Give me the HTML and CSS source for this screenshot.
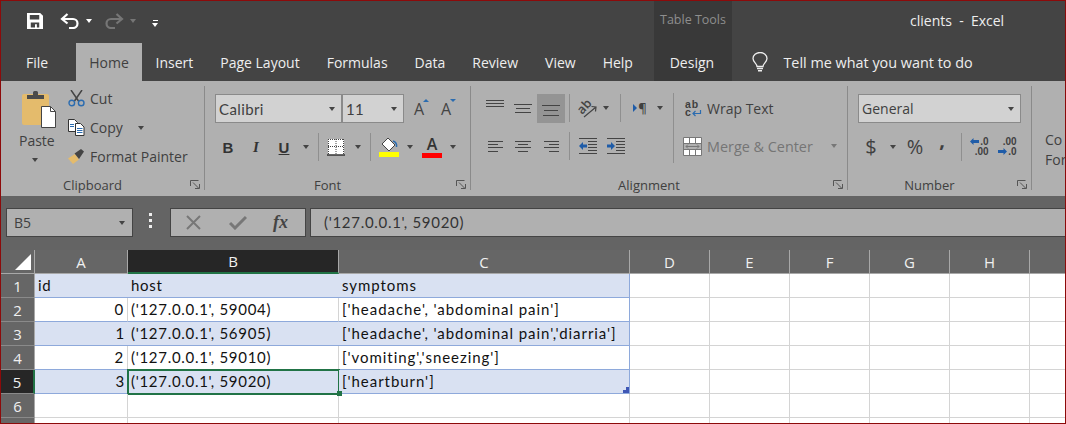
FILE: index.html
```html
<!DOCTYPE html>
<html lang="en">
<head>
    <meta charset="UTF-8">
    <title>clients - Excel</title>
    <link rel="stylesheet" href="styles.css">
</head>
<body>

<div class="window">

    <div class="titlebar">
        <div class="qat">
            <svg class="qat-save" width="16" height="16" viewBox="0 0 17 17"><path fill="#fff" d="M0 0h14l3 3v14H0z"/><path fill="#444" d="M3 2h10v5H3zM4 10h9v5.500h-2.500v-3.500H8.500v3.500H4z"/></svg>
            <svg class="qat-undo" width="20" height="16" viewBox="0 0 20 16"><path fill="none" stroke="#fff" stroke-width="2.200" d="M7.500 1 2 6l5.500 4.500M2 6h11a4.500 4.500 0 0 1 0 9h-4"/></svg>
            <span class="caret caret-white qat-caret"></span>
            <svg class="qat-redo" width="20" height="16" viewBox="0 0 20 16"><path fill="none" stroke="#767676" stroke-width="2.200" d="M12.500 1 18 6l-5.500 4.500M18 6H7a4.500 4.500 0 0 0 0 9h4"/></svg>
            <span class="caret caret-grey qat-caret"></span>
            <span class="qat-custom"><i></i><span class="caret caret-white"></span></span>
        </div>
        <div class="context-title">Table Tools</div>
        <div class="app-title">clients&nbsp; -&nbsp; Excel</div>
    </div>

    <div class="tabs">
        <span class="tab tab-file">File</span>
        <span class="tab tab-active">Home</span>
        <span class="tab">Insert</span>
        <span class="tab">Page Layout</span>
        <span class="tab">Formulas</span>
        <span class="tab">Data</span>
        <span class="tab">Review</span>
        <span class="tab">View</span>
        <span class="tab">Help</span>
        <span class="tab tab-design">Design</span>
        <svg class="bulb" width="16" height="20" viewBox="0 0 16 20"><path fill="none" stroke="#eee" stroke-width="1.300" d="M5 14.500C5 11.500 1 10 1 6.500a7 6 0 0 1 14 0C15 10 11 11.500 11 14.500z"/><path stroke="#eee" stroke-width="1.500" d="M5 16.500h6M6 18.800h4"/></svg>
        <span class="tell-me">Tell me what you want to do</span>
    </div>

    <div class="ribbon">

        <section class="group group-clipboard">
            <div class="group-body clip-body">
                <div class="paste">
                    <svg width="35" height="39" viewBox="0 0 35 39"><rect y="4" width="27" height="31" rx="2" fill="#e4bb6c"/><path fill="#4b4b4b" d="M5 9V5h6V2.500a1.500 1.500 0 0 1 1.500-1.500h2A1.500 1.500 0 0 1 16 2.500V5h6v4z"/><path fill="#fff" stroke="#444" d="M19.500 16.500h9l5 5v16h-14z"/><path fill="none" stroke="#444" d="M28.500 16.500v5h5"/></svg>
                    <span class="paste-label">Paste</span>
                    <span class="caret"></span>
                </div>
                <div class="clip-actions">
                    <div class="clip-action">
                        <svg width="17" height="17" viewBox="0 0 17 17"><path stroke="#444" stroke-width="1.500" fill="none" d="M3 0l7.500 11M14 0 6.500 11"/><circle cx="3.800" cy="13" r="2.800" fill="none" stroke="#2b6cb0" stroke-width="1.400"/><circle cx="13.200" cy="13" r="2.800" fill="none" stroke="#2b6cb0" stroke-width="1.400"/></svg>
                        <span>Cut</span>
                    </div>
                    <div class="clip-action">
                        <svg width="17" height="17" viewBox="0 0 17 17"><path fill="#fff" stroke="#333" d="M.5.500h6l3 3v9h-9z"/><path fill="#fff" stroke="#333" d="M7.500 4.500h5l3.500 3.500v8.500H7.500z"/><path stroke="#2b6cb0" d="M9 9.500h5.500M9 11.500h5.500M9 13.500h5.500M2 5.500h4M2 7.500h4"/></svg>
                        <span>Copy</span>
                        <span class="caret copy-caret"></span>
                    </div>
                    <div class="clip-action">
                        <svg width="17" height="17" viewBox="0 0 17 17"><path fill="#e4bb6c" d="M0 10.500 7 6l4 5.500L5 16z"/><path fill="#444" d="M6.500 5.500 13 1l3 2.500-5 7.500z"/></svg>
                        <span>Format Painter</span>
                    </div>
                </div>
            </div>
            <div class="group-label">Clipboard</div>
            <svg class="launcher" width="10" height="9" viewBox="0 0 10 9"><path fill="none" stroke="#555" d="M.5 6V.5h8M3 2.500 8.500 8M9.500 4v4.500H5"/></svg>
        </section>

        <section class="group group-font">
            <div class="group-body font-body">
                <div class="row font-row-top">
                    <div class="select select-font"><span class="select-text">Calibri</span><span class="caret"></span></div>
                    <div class="select select-size"><span class="select-text">11</span><span class="caret"></span></div>
                    <span class="size-btn">A<i class="size-mark mark-up"></i></span>
                    <span class="size-btn">A<i class="size-mark mark-down"></i></span>
                </div>
                <div class="row font-row-bottom">
                    <b class="glyph">B</b>
                    <i class="glyph glyph-italic">I</i>
                    <u class="glyph glyph-under">U</u>
                    <span class="caret"></span>
                    <span class="sep"></span>
                    <svg width="18" height="18" viewBox="0 0 18 18"><path fill="#fff" d="M1 1h16v16H1z"/><path stroke="#444" stroke-dasharray="1 1" d="M1 1.500h16M1 8.500h16M9 1v15M1.500 1v15M16.500 1v15"/><path stroke="#333" stroke-width="1.500" d="M0 17h18"/></svg>
                    <span class="caret"></span>
                    <span class="sep"></span>
                    <svg width="20" height="20" viewBox="0 0 20 20"><path fill="#fff" stroke="#444" d="M9 1l7 7-6 6-7-7z"/><path fill="none" stroke="#2b6cb0" stroke-width="1.500" d="M14 4c3 1 4 3 3.500 6"/><path fill="#ff0" d="M0 15h20v5H0z"/></svg>
                    <span class="caret"></span>
                    <span class="font-color">A</span>
                    <span class="caret"></span>
                </div>
            </div>
            <div class="group-label">Font</div>
            <svg class="launcher" width="10" height="9" viewBox="0 0 10 9"><path fill="none" stroke="#555" d="M.5 6V.5h8M3 2.500 8.500 8M9.500 4v4.500H5"/></svg>
        </section>

        <section class="group group-align">
            <div class="group-body align-body">
                <div class="align-left">
                    <div class="row align-row-top">
                        <svg width="18" height="9" viewBox="0 0 18 9" class="up-4"><path stroke="#444" d="M0 .5h18M0 3.500h18M0 6.500h18"/></svg>
                        <svg width="18" height="9" viewBox="0 0 18 9"><path stroke="#444" d="M0 .5h18M2 4.500h14M1 8.500h16"/></svg>
                        <span class="tool-active"><svg width="18" height="11" viewBox="0 0 18 11"><path stroke="#444" d="M0 .5h18M2 5.500h14M1 10.500h16"/></svg></span>
                        <span class="sep"></span>
                        <svg class="orient-icon" width="22" height="22" viewBox="0 0 22 22"><text x="1" y="14" class="orient-text" transform="rotate(-48 8 10)">ab</text><path fill="none" stroke="#444" stroke-width="1.200" d="M8 20 20 10M15.500 9.500l4.500.5-.5 4.500"/></svg>
                        <span class="caret"></span>
                        <span class="sep sep-mid"></span>
                        <span class="para"><i class="para-arrow"></i>&para;</span>
                        <span class="caret"></span>
                    </div>
                    <div class="row align-row-bottom">
                        <svg width="15" height="11" viewBox="0 0 15 11"><path stroke="#444" d="M0 .5h15M0 3.500h10M0 6.500h15M0 10.500h10"/></svg>
                        <svg width="16" height="11" viewBox="0 0 16 11"><path stroke="#444" d="M0 .5h16M3 3.500h10M0 6.500h16M3 10.500h10"/></svg>
                        <svg width="15" height="11" viewBox="0 0 15 11"><path stroke="#444" d="M0 .5h15M5 3.500h10M0 6.500h15M5 10.500h10"/></svg>
                        <span class="sep"></span>
                        <svg width="18" height="16" viewBox="0 0 18 16"><path stroke="#444" d="M0 .5h18M9 3.500h9M9 6.500h9M9 9.500h9M9 12.500h9M0 15.500h18"/><path fill="#1f5ca8" d="M0 8l4-4v2.500h4v3H4V12z"/></svg>
                        <svg width="18" height="16" viewBox="0 0 18 16"><path stroke="#444" d="M0 .5h18M9 3.500h9M9 6.500h9M9 9.500h9M9 12.500h9M0 15.500h18"/><path fill="#1f5ca8" d="M8 8 4 4v2.500H0v3h4V12z"/></svg>
                    </div>
                </div>
                <span class="sep sep-tall"></span>
                <div class="align-right">
                    <div class="wide-tool wrap-tool">
                        <svg class="wrap-icon" width="17" height="17" viewBox="0 0 17 17"><text x="0" y="8">ab</text><text x="0" y="16">c</text><path fill="none" stroke="#2b6cb0" stroke-width="1.200" d="M15.500 10v3.500H8M10.500 11 8 13.500l2.500 2.500"/></svg>
                        <span>Wrap Text</span>
                    </div>
                    <div class="wide-tool merge-tool">
                        <svg width="19" height="19" viewBox="0 0 19 19"><path fill="#fff" stroke="#777" d="M.5.500h18v18H.5z"/><path stroke="#777" d="M0 6.500h19M0 12.500h19M6.500 0v6M12.500 0v6M6.500 13v6M12.500 13v6"/><path fill="#b0b0b0" d="M1 7h17v5H1z"/><path fill="none" stroke="#777" d="M3 9.500h13M5 7.500l-2 2 2 2M14 7.500l2 2-2 2"/></svg>
                        <span>Merge &amp; Center</span>
                        <span class="caret caret-dim merge-caret"></span>
                    </div>
                </div>
            </div>
            <div class="group-label">Alignment</div>
            <svg class="launcher" width="10" height="9" viewBox="0 0 10 9"><path fill="none" stroke="#555" d="M.5 6V.5h8M3 2.500 8.500 8M9.500 4v4.500H5"/></svg>
        </section>

        <section class="group group-number">
            <div class="group-body number-body">
                <div class="select select-format"><span class="select-text select-ui">General</span><span class="caret"></span></div>
                <div class="row number-row">
                    <span class="num-glyph">$</span>
                    <span class="caret"></span>
                    <span class="num-glyph">%</span>
                    <span class="num-glyph num-comma">,</span>
                    <span class="sep"></span>
                    <span class="decimal">
                        <span><svg width="9" height="7" viewBox="0 0 9 7"><path fill="#1f5ca8" d="M0 3.500 3.500 0v2H9v3H3.500v2z"/></svg>.0</span>
                        <span>.00</span>
                    </span>
                    <span class="decimal">
                        <span>.00</span>
                        <span><svg width="9" height="7" viewBox="0 0 9 7"><path fill="#1f5ca8" d="M9 3.500 5.500 0v2H0v3h5.500v2z"/></svg>.0</span>
                    </span>
                </div>
            </div>
            <div class="group-label">Number</div>
            <svg class="launcher" width="10" height="9" viewBox="0 0 10 9"><path fill="none" stroke="#555" d="M.5 6V.5h8M3 2.500 8.500 8M9.500 4v4.500H5"/></svg>
        </section>

        <div class="cut-off">Co<br>For</div>
    </div>

    <div class="formula-bar">
        <div class="name-box"><span>B5</span><span class="caret"></span></div>
        <div class="formula-dots"><i></i><i></i><i></i></div>
        <div class="formula-buttons">
            <svg width="17" height="15" viewBox="0 0 17 15"><path stroke="#777" stroke-width="2" d="M2 1l13 13M15 1 2 14"/></svg>
            <svg width="18" height="15" viewBox="0 0 18 15"><path fill="none" stroke="#777" stroke-width="3" d="M1 8l5 5L17 2"/></svg>
            <span class="fx">fx</span>
        </div>
        <div class="formula-input">('127.0.0.1', 59020)</div>
    </div>

    <div class="sheet">
        <div class="corner"><i></i></div>
        <div class="col-head">A</div>
        <div class="col-head col-active">B</div>
        <div class="col-head">C</div>
        <div class="col-head">D</div>
        <div class="col-head">E</div>
        <div class="col-head">F</div>
        <div class="col-head">G</div>
        <div class="col-head">H</div>
        <div class="col-head"></div>

        <div class="row-head">1</div>
        <div class="cell band">id</div>
        <div class="cell band">host</div>
        <div class="cell band band-end">symptoms</div>
        <div class="cell"></div><div class="cell"></div><div class="cell"></div><div class="cell"></div><div class="cell"></div><div class="cell"></div>

        <div class="row-head">2</div>
        <div class="cell plain num">0</div>
        <div class="cell plain">('127.0.0.1', 59004)</div>
        <div class="cell plain band-end">['headache', 'abdominal pain']</div>
        <div class="cell"></div><div class="cell"></div><div class="cell"></div><div class="cell"></div><div class="cell"></div><div class="cell"></div>

        <div class="row-head">3</div>
        <div class="cell band num">1</div>
        <div class="cell band">('127.0.0.1', 56905)</div>
        <div class="cell band band-end">['headache', 'abdominal pain','diarria']</div>
        <div class="cell"></div><div class="cell"></div><div class="cell"></div><div class="cell"></div><div class="cell"></div><div class="cell"></div>

        <div class="row-head">4</div>
        <div class="cell plain num">2</div>
        <div class="cell plain">('127.0.0.1', 59010)</div>
        <div class="cell plain band-end">['vomiting','sneezing']</div>
        <div class="cell"></div><div class="cell"></div><div class="cell"></div><div class="cell"></div><div class="cell"></div><div class="cell"></div>

        <div class="row-head row-active">5</div>
        <div class="cell band num">3</div>
        <div class="cell band cell-selected">('127.0.0.1', 59020)<i class="fill-handle"></i></div>
        <div class="cell band band-end">['heartburn']<i class="resize-handle"></i></div>
        <div class="cell"></div><div class="cell"></div><div class="cell"></div><div class="cell"></div><div class="cell"></div><div class="cell"></div>

        <div class="row-head">6</div>
        <div class="cell"></div><div class="cell"></div><div class="cell"></div>
        <div class="cell"></div><div class="cell"></div><div class="cell"></div><div class="cell"></div><div class="cell"></div><div class="cell"></div>

        <div class="row-head"></div>
        <div class="cell"></div><div class="cell"></div><div class="cell"></div>
        <div class="cell"></div><div class="cell"></div><div class="cell"></div><div class="cell"></div><div class="cell"></div><div class="cell"></div>
    </div>
</div>

</body>
</html>
```

FILE: styles.css
```css
* {
    box-sizing: border-box;
}

body {
    margin: 0;
    font-family: 'Open Sans', 'Noto Sans', sans-serif;
    color: #404040;
    background: #fff;
}

i {
    font-style: normal;
}

.window {
    width: 1066px;
    height: 424px;
    border: 1px solid #8c0a0a;
    overflow: hidden;
    background: #444;
}

/* title bar */

.titlebar {
    display: flex;
    height: 42px;
    background: #444;
    color: #eee;
}

.qat {
    display: flex;
    align-items: center;
    width: 653px;
    padding-left: 26px;
    padding-bottom: 3px;
}

.qat-undo {
    margin-left: 17px;
}

.qat-caret {
    margin-left: 6px;
}

.qat-redo {
    margin-left: 12px;
}

.qat-custom {
    display: flex;
    flex-direction: column;
    align-items: center;
    margin-left: 16px;
    margin-top: 5px;
    gap: 2px;
}

.qat-custom i {
    width: 5px;
    height: 1px;
    background: #fff;
}

.context-title {
    width: 78px;
    background: #393939;
    color: #8e8e8e;
    font-size: 12.500px;
    text-align: center;
    padding-top: 10px;
}

.app-title {
    margin-left: 178px;
    padding-top: 10px;
    font-size: 14px;
    color: #eee;
}

/* tabs */

.tabs {
    display: flex;
    align-items: center;
    height: 38px;
    background: #444;
    color: #eee;
    font-size: 14px;
}

.tab {
    display: flex;
    align-items: center;
    justify-content: center;
    height: 38px;
    padding: 0 13.500px;
    white-space: nowrap;
}

.tab-file {
    padding: 0 3px 0 0;
    width: 75px;
}

.tab-active {
    width: 66px;
    padding: 0;
    background: #b0b0b0;
    color: #404040;
}

.tab-design {
    width: 78px;
    padding: 0 3px 0 0;
    margin-left: 8px;
    background: #393939;
}

.bulb {
    margin-left: 20px;
    margin-right: 15px;
}

.tell-me {
    font-size: 14.400px;
    white-space: nowrap;
}

/* ribbon */

.ribbon {
    display: flex;
    height: 115px;
    padding: 5px 0 6px;
    background: #b0b0b0;
    font-size: 14px;
    overflow: hidden;
}

.group {
    position: relative;
    display: flex;
    flex-direction: column;
    flex-shrink: 0;
    border-right: 1px solid #8a8a8a;
}

.group-clipboard {
    width: 204px;
}

.group-font {
    width: 266px;
}

.group-align {
    width: 377px;
}

.group-number {
    width: 184px;
}

.group-body {
    flex: 1;
}

.group-label {
    height: 14px;
    padding-right: 20px;
    text-align: center;
    font-size: 13px;
    line-height: 18px;
}

.launcher {
    position: absolute;
    right: 4px;
    bottom: 1px;
}

.caret {
    display: inline-block;
    width: 0;
    height: 0;
    border-left: 3.500px solid transparent;
    border-right: 3.500px solid transparent;
    border-top: 4px solid #444;
}

.caret-white {
    border-top-color: #fff;
}

.caret-grey {
    border-top-color: #767676;
}

.caret-dim {
    border-top-color: #777;
}

.sep {
    width: 1px;
    height: 28px;
    background: #8f8f8f;
}

.row {
    display: grid;
    align-items: center;
    justify-items: center;
}

/* clipboard */

.clip-body {
    display: flex;
    padding-left: 21px;
}

.paste {
    display: flex;
    flex-direction: column;
    align-items: flex-start;
    width: 35px;
    padding-top: 4px;
}

.paste-label {
    margin: 2px 0 0 -3px;
    font-size: 14px;
    line-height: 20px;
}

.paste .caret {
    margin: 7px 0 0 10px;
}

.clip-actions {
    display: flex;
    flex-direction: column;
    gap: 12px;
    margin-left: 11px;
    padding-top: 4px;
}

.clip-action {
    display: flex;
    align-items: center;
    gap: 5px;
    height: 17px;
    white-space: nowrap;
}

.copy-caret {
    margin-left: 10px;
}

/* font */

.font-body {
    padding: 8px 0 0 10px;
}

.font-row-top {
    grid-template-columns: 127px 63px 28px 26px;
    justify-items: start;
}

.font-row-bottom {
    grid-template-columns: 26px 30px 26px 18px 6px 30px 14px 10px 28px 14px 30px 12px;
    height: 28px;
    margin-top: 10px;
}

.select {
    display: flex;
    align-items: center;
    justify-content: space-between;
    height: 29px;
    padding: 0 6px 0 3px;
    background: #d2d2d2;
    border: 1px solid #8a8a8a;
}

.select-font {
    width: 127px;
}

.select-size {
    width: 62px;
}

.select-text {
    font-family: 'Lato', sans-serif;
    font-size: 15px;
    letter-spacing: 0.400px;
}

.select-ui {
    font-family: 'Open Sans', sans-serif;
    font-size: 14px;
    letter-spacing: 0;
}

.size-btn {
    position: relative;
    justify-self: center;
    font-size: 16px;
    line-height: 20px;
    color: #444;
}

.size-mark {
    position: absolute;
    right: -5px;
    top: 0;
    width: 0;
    height: 0;
    border-left: 3px solid transparent;
    border-right: 3px solid transparent;
}

.mark-up {
    border-bottom: 3px solid #2b6cb0;
}

.mark-down {
    border-top: 3px solid #2b6cb0;
}

.glyph {
    font-family: 'Liberation Sans', sans-serif;
    font-size: 15px;
    font-weight: bold;
    color: #333;
}

.glyph-italic {
    font-family: 'Liberation Serif', serif;
    font-style: italic;
}

.font-color {
    font-size: 16px;
    font-weight: 600;
    line-height: 17px;
    width: 20px;
    text-align: center;
    color: #333;
    border-bottom: 5px solid #f00;
}

/* alignment */

.align-body {
    display: flex;
    padding: 7px 0 0 10px;
}

.align-left {
    width: 192px;
}

.align-row-top {
    grid-template-columns: 28px 28px 28px 8px 28px 10px 18px 22px 18px;
    height: 30px;
}

.align-row-bottom {
    grid-template-columns: 28px 28px 28px 8px 30px 26px;
    height: 28px;
    margin-top: 9px;
}

.up-4 {
    transform: translateY(-4px);
}

.tool-active {
    display: flex;
    align-items: flex-end;
    justify-content: center;
    width: 28px;
    height: 29px;
    padding-bottom: 7px;
    background: #949494;
}

.orient-icon {
    overflow: visible;
}

.orient-text {
    font-size: 12.500px;
    font-weight: 600;
    fill: #444;
}

.sep-mid {
    height: 28px;
}

.para {
    display: flex;
    align-items: center;
    gap: 1px;
    font-size: 13px;
    font-weight: 600;
}

.para-arrow {
    width: 0;
    height: 0;
    border-top: 4px solid transparent;
    border-bottom: 4px solid transparent;
    border-left: 4px solid #1f5ca8;
}

.sep-tall {
    height: 70px;
    flex-shrink: 0;
}

.align-right {
    display: flex;
    flex-direction: column;
    gap: 10px;
    padding-top: 1px;
}

.wide-tool {
    display: flex;
    align-items: center;
    height: 28px;
    white-space: nowrap;
}

.wrap-tool {
    gap: 5px;
    padding-left: 11px;
}

.wrap-icon {
    overflow: visible;
}

.wrap-icon text {
    font-family: 'Liberation Sans', sans-serif;
    font-size: 10.500px;
    font-weight: bold;
    letter-spacing: 0.800px;
    fill: #404040;
}

.merge-tool {
    gap: 5px;
    padding-left: 9px;
    font-size: 14.400px;
    color: #757575;
}

.merge-caret {
    margin-left: 13px;
}

/* number */

.number-body {
    padding: 8px 0 0 10px;
}

.select-format {
    width: 163px;
}

.number-row {
    grid-template-columns: 26px 18px 26px 28px 10px 27px 29px;
    height: 28px;
    margin-top: 10px;
}

.num-glyph {
    font-size: 20px;
    line-height: 22px;
}

.num-comma {
    font-weight: bold;
    margin-top: -14px;
}

.decimal {
    display: flex;
    flex-direction: column;
    align-items: flex-end;
    font-family: 'Liberation Sans', sans-serif;
    font-size: 10px;
    font-weight: bold;
    line-height: 10px;
}

.decimal svg {
    margin-right: 1px;
}

.cut-off {
    padding: 44px 0 0 13px;
    line-height: 20px;
    white-space: nowrap;
}

/* formula bar */

.formula-bar {
    display: flex;
    align-items: flex-start;
    height: 54px;
    padding: 12px 0 0 5px;
    background: #646464;
}

.name-box {
    display: flex;
    align-items: center;
    justify-content: space-between;
    width: 127px;
    height: 29px;
    padding: 0 7px 0 7px;
    background: #b0b0b0;
    border: 1px solid #444;
    font-size: 14px;
}

.formula-dots {
    display: flex;
    flex-direction: column;
    gap: 3px;
    width: 37px;
    padding: 5px 0 0 16px;
}

.formula-dots i {
    width: 3px;
    height: 3px;
    background: #eee;
}

.formula-buttons {
    display: flex;
    align-items: center;
    justify-content: space-between;
    width: 136px;
    height: 29px;
    padding: 0 17px 0 14px;
    background: #b0b0b0;
    border: 1px solid #444;
}

.fx {
    font-family: 'Liberation Serif', serif;
    font-size: 18px;
    font-style: italic;
    font-weight: bold;
    color: #444;
}

.formula-input {
    flex: 1;
    height: 29px;
    margin-left: 4px;
    padding-left: 13px;
    background: #b0b0b0;
    border: 1px solid #444;
    border-right: 0;
    font-family: 'Lato', sans-serif;
    font-size: 15px;
    letter-spacing: 0.700px;
    line-height: 27px;
    color: #333;
}

/* sheet */

.sheet {
    display: grid;
    grid-template-columns: 34px 93px 211px 291px 80px 80px 80px 80px 80px 40px;
    grid-template-rows: 24px repeat(7, 24px);
    background: #fff;
    font-family: 'Lato', sans-serif;
    font-size: 15px;
    letter-spacing: 0.700px;
    color: #111;
}

.corner {
    display: flex;
    align-items: flex-end;
    justify-content: flex-end;
    padding: 0 3px 3px 0;
    background: #666;
    border-bottom: 1px solid #a8a8a8;
    border-right: 1px solid #a8a8a8;
}

.corner i {
    width: 0;
    height: 0;
    border-left: 16px solid transparent;
    border-bottom: 16px solid #fff;
}

.col-head {
    display: flex;
    align-items: center;
    justify-content: center;
    background: #666;
    color: #f0f0f0;
    font-family: 'Open Sans', sans-serif;
    font-size: 15px;
    letter-spacing: 0;
    border-right: 1px solid #a8a8a8;
    border-bottom: 1px solid #a8a8a8;
}

.col-active {
    background: #262626;
    border-bottom: 2px solid #217346;
}

.row-head {
    display: flex;
    align-items: center;
    justify-content: center;
    background: #666;
    color: #f0f0f0;
    font-family: 'Open Sans', sans-serif;
    font-size: 15px;
    letter-spacing: 0;
    border-right: 1px solid #a8a8a8;
    border-bottom: 1px solid #8a8a8a;
}

.row-active {
    background: #262626;
    border-right: 2px solid #217346;
}

.cell {
    position: relative;
    padding-left: 3px;
    border-right: 1px solid #d4d4d4;
    border-bottom: 1px solid #d4d4d4;
    line-height: 23px;
    white-space: nowrap;
}

.band {
    background: #d9e1f2;
    border-right: 0;
    border-bottom: 1px solid #8ea9db;
}

.plain {
    border-bottom: 1px solid #8ea9db;
}

.band-end {
    border-right: 1px solid #8ea9db;
    letter-spacing: 0.950px;
}

.num {
    padding-right: 3px;
    text-align: right;
}

.cell-selected {
    outline: 2px solid #217346;
    outline-offset: -1px;
}

.fill-handle {
    position: absolute;
    right: -3px;
    bottom: -3px;
    width: 5px;
    height: 5px;
    background: #217346;
    z-index: 1;
}

.resize-handle {
    position: absolute;
    right: 0;
    bottom: 0;
    width: 6px;
    height: 6px;
    background: #3f57b5;
    clip-path: polygon(50% 0, 100% 0, 100% 100%, 0 100%, 0 50%, 50% 50%);
}
```
